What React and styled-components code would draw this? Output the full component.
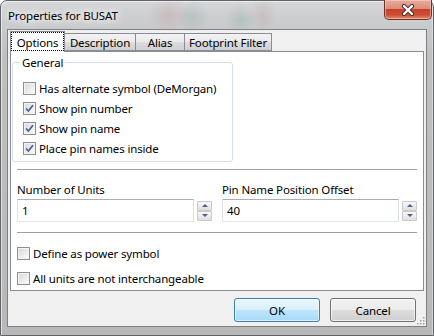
import styled, { createGlobalStyle } from 'styled-components';

const GlobalStyle = createGlobalStyle`
  html, body {
    margin: 0;
    padding: 0;
    background: #ffffff;
  }
  body {
    font-family: "Noto Sans", "DejaVu Sans", sans-serif;
    font-size: 11.5px;
    letter-spacing: -0.15px;
    color: #000;
  }
  * { box-sizing: border-box; }
`;

const Window = styled.div`
  width: 434px;
  height: 336px;
  display: flex;
  flex-direction: column;
  border: 1px solid #5f6368;
  border-radius: 7px 7px 0 0;
  padding: 0 6px 8px 6px;
  background:
    radial-gradient(ellipse 22px 18px at 168px 14px, rgba(180, 120, 120, 0.22), transparent),
    radial-gradient(ellipse 16px 16px at 192px 16px, rgba(100, 150, 145, 0.22), transparent),
    radial-gradient(ellipse 16px 16px at 240px 18px, rgba(100, 150, 145, 0.22), transparent),
    radial-gradient(ellipse 14px 18px at 262px 14px, rgba(180, 120, 120, 0.2), transparent),
    linear-gradient(180deg, #d4d6d8 0px, #c8c9cb 28px, #bfbfbf 60px, #b8b8b8 100%);
  box-shadow: inset 1px 1px 0 rgba(255, 255, 255, 0.6), inset -1px 0 0 rgba(255, 255, 255, 0.4);
`;

const TitleBar = styled.div`
  height: 28px;
  display: flex;
  justify-content: space-between;
  align-items: flex-start;
`;

const Title = styled.div`
  margin: 7px 0 0 1px;
  line-height: 15px;
  color: #000;
  text-shadow: 0 0 6px #fff, 0 0 10px #fff, 0 0 14px rgba(255, 255, 255, 0.9);
`;

const CloseButton = styled.div`
  width: 48px;
  height: 20px;
  margin: -1px -5px 0 0;
  border: 1px solid #6b3328;
  border-top: none;
  border-radius: 0 0 5px 5px;
  display: flex;
  align-items: center;
  justify-content: center;
  background: linear-gradient(180deg, #e9ab9e 0%, #de8b79 45%, #c5432b 50%, #cf4d33 78%, #e18a70 100%);
  box-shadow: inset 0 0 0 1px rgba(255, 220, 210, 0.5);
`;

const Client = styled.div`
  position: relative;
  flex: 1;
  display: flex;
  flex-direction: column;
  padding: 1px 2px 0;
  background: #f0f0f0;
  border: 1px solid #7d7f82;
`;

const TabStrip = styled.div`
  position: relative;
  z-index: 1;
  height: 20px;
  display: flex;
  align-items: flex-end;
`;

const Tab = styled.div`
  width: ${(p) => p.$w}px;
  height: ${(p) => (p.$active ? 21 : 18)}px;
  margin-bottom: ${(p) => (p.$active ? -1 : 0)}px;
  display: flex;
  align-items: center;
  justify-content: center;
  line-height: 15px;
  border: 1px solid #898c95;
  border-bottom: ${(p) => (p.$active ? 'none' : '1px solid #898c95')};
  border-left: ${(p) => (p.$first ? '1px solid #898c95' : 'none')};
  background: ${(p) =>
    p.$active ? '#ffffff' : 'linear-gradient(180deg, #f2f2f2 0%, #ebebeb 50%, #dddddd 51%, #cfcfcf 100%)'};
  padding-top: ${(p) => (p.$active ? 0 : 1)}px;
  outline: ${(p) => (p.$active ? '1px dotted #000' : 'none')};
  outline-offset: -2px;
`;

const Panel = styled.div`
  height: 240px;
  display: flex;
  flex-direction: column;
  background: #ffffff;
  border: 1px solid #898c95;
`;

const GroupBox = styled.fieldset`
  width: 221px;
  margin: 3px 0 0 1px;
  padding: 8px 0 3px 10px;
  border: 1px solid #d5dfe5;
  border-radius: 3px;
  min-inline-size: 0;
`;

const Legend = styled.legend`
  margin-left: -3px;
  padding: 0 2px;
  line-height: 15px;
`;

const CheckRow = styled.div`
  height: 20px;
  display: flex;
  align-items: center;
  gap: 3px;
  line-height: 15px;
  margin-top: ${(p) => p.$mt || 0}px;
`;

const Box = styled.span`
  width: 13px;
  height: 13px;
  flex: none;
  display: flex;
  align-items: center;
  justify-content: center;
  border: 1px solid #8f8f8f;
  background: linear-gradient(135deg, #d3d5d9 0%, #eeeeee 60%, #fbfbfb 100%);
  box-shadow: inset 0 0 0 1px #f4f4f4;
`;

const Section = styled.div`
  margin: ${(p) => p.$mt || 0}px 6px 0 6px;
`;

const Separator = styled.div`
  height: 1px;
  margin: ${(p) => p.$mt}px 6px 0 6px;
  background: #a0a0a0;
`;

const FieldGrid = styled.div`
  display: grid;
  grid-template-columns: 194px 194px;
  column-gap: 11px;
  margin: 12px 6px 0 6px;
`;

const Field = styled.div`
  display: flex;
  flex-direction: column;
  gap: 2px;
`;

const Label = styled.div`
  line-height: 15px;
`;

const SpinRow = styled.div`
  display: flex;
  align-items: center;
  gap: 3px;
`;

const TextBox = styled.input`
  width: 177px;
  height: 23px;
  padding: 0 0 0 4px;
  font: inherit;
  letter-spacing: inherit;
  color: #000;
  background: #fff;
  border: 1px solid;
  border-color: #abadb3 #dbdfe6 #e3e9ef #e2e3ea;
  outline: none;
`;

const Spinner = styled.div`
  display: flex;
  flex-direction: column;
`;

const SpinButton = styled.div`
  width: 15px;
  height: 10px;
  display: flex;
  align-items: center;
  justify-content: center;
  border: 1px solid #c9cacb;
  border-radius: 1px;
  background: linear-gradient(180deg, #f7f7f7 0%, #ececec 50%, #dedede 100%);
`;

const Arrow = styled.span`
  width: 0;
  height: 0;
  border-left: 3px solid transparent;
  border-right: 3px solid transparent;
  ${(p) => (p.$down ? 'border-top: 3px solid #4d6185;' : 'border-bottom: 3px solid #4d6185;')}
`;

const Footer = styled.div`
  display: flex;
  justify-content: flex-end;
  gap: 10px;
  padding: 7px 8px 0 0;
`;

const Button = styled.div`
  width: 86px;
  height: 24px;
  display: flex;
  align-items: center;
  justify-content: center;
  line-height: 15px;
  border-radius: 3px;
  border: 1px solid ${(p) => (p.$default ? '#3c7fb1' : '#707070')};
  background: ${(p) =>
    p.$default
      ? 'linear-gradient(180deg, #eaf6fd 0%, #d9f0fc 50%, #bee6fd 51%, #a7d9f5 100%)'
      : 'linear-gradient(180deg, #f2f2f2 0%, #ebebeb 50%, #dddddd 51%, #cfcfcf 100%)'};
  box-shadow: inset 0 0 0 1px ${(p) => (p.$default ? 'rgba(255,255,255,0.6)' : 'rgba(255,255,255,0.7)')};
`;

const Grip = styled.svg`
  position: absolute;
  right: 1px;
  bottom: 1px;
`;

function Check() {
  return (
    <svg width="9" height="9" viewBox="0 0 9 9">
      <path d="M1 4.5 L3.4 7 L8 1.2" fill="none" stroke="#4a5e96" strokeWidth="1.7" />
    </svg>
  );
}

function CheckBox({ label, checked, mt }) {
  return (
    <CheckRow $mt={mt}>
      <Box>{checked && <Check />}</Box>
      <span>{label}</span>
    </CheckRow>
  );
}

function NumberField({ label, value }) {
  return (
    <Field>
      <Label>{label}</Label>
      <SpinRow>
        <TextBox defaultValue={value} readOnly />
        <Spinner>
          <SpinButton>
            <Arrow />
          </SpinButton>
          <SpinButton>
            <Arrow $down />
          </SpinButton>
        </Spinner>
      </SpinRow>
    </Field>
  );
}

export default function App() {
  return (
    <>
      <GlobalStyle />
      <Window>
        <TitleBar>
          <Title>Properties for BUSAT</Title>
          <CloseButton>
            <svg width="14" height="12" viewBox="0 0 14 12">
              <path d="M3 2 L11 10 M11 2 L3 10" stroke="#3a2a2a" strokeWidth="4.2" strokeLinecap="round" />
              <path d="M3 2 L11 10 M11 2 L3 10" stroke="#ffffff" strokeWidth="2.4" strokeLinecap="round" />
            </svg>
          </CloseButton>
        </TitleBar>
        <Client>
          <TabStrip>
            <Tab $w={55} $active $first>Options</Tab>
            <Tab $w={71}>Description</Tab>
            <Tab $w={49}>Alias</Tab>
            <Tab $w={87}>Footprint Filter</Tab>
          </TabStrip>
          <Panel>
            <GroupBox>
              <Legend>General</Legend>
              <CheckBox label="Has alternate symbol (DeMorgan)" />
              <CheckBox label="Show pin number" checked />
              <CheckBox label="Show pin name" checked />
              <CheckBox label="Place pin names inside" checked />
            </GroupBox>
            <Separator $mt={7} />
            <FieldGrid>
              <NumberField label="Number of Units" value="1" />
              <NumberField label="Pin Name Position Offset" value="40" />
            </FieldGrid>
            <Separator $mt={10} />
            <Section $mt={10}>
              <CheckBox label="Define as power symbol" />
              <CheckBox label="All units are not interchangeable" mt={5} />
            </Section>
          </Panel>
          <Footer>
            <Button $default>OK</Button>
            <Button>Cancel</Button>
          </Footer>
          <Grip width="10" height="10" viewBox="0 0 10 10">
            {[
              [8, 2], [8, 5], [5, 5], [8, 8], [5, 8], [2, 8],
            ].map(([x, y]) => (
              <rect key={`${x}-${y}`} x={x} y={y} width="1.5" height="1.5" fill="#a0a0a0" />
            ))}
          </Grip>
        </Client>
      </Window>
    </>
  );
}
